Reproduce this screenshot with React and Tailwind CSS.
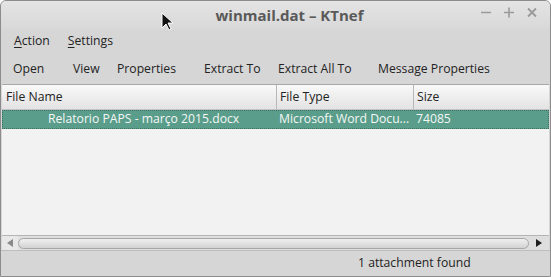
import React from 'react';

const Underlined = ({ first, rest }) => (
  <span>
    <span className="underline underline-offset-2">{first}</span>
    {rest}
  </span>
);

const App = () => {
  const toolbar = [
    ['Open', 'w-[60px]'],
    ['View', 'w-[44px]'],
    ['Properties', 'w-[87px]'],
    ['Extract To', 'w-[74px]'],
    ['Extract All To', 'w-[100px]'],
    ['Message Properties', ''],
  ];

  return (
    <div
      className="w-[551px] h-[277px] flex flex-col bg-[#d6d6d6] border border-[#8c8c8c] rounded-t-[6px] overflow-hidden relative text-[#232323]"
      style={{ fontFamily: '"Open Sans", "Noto Sans", sans-serif' }}
    >
      {/* title bar */}
      <div className="h-[29px] relative flex items-center justify-center bg-gradient-to-b from-[#e4e4e4] to-[#d8d8d8]">
        <span className="text-[15px] font-bold text-[#595959] pl-[28px]">winmail.dat – KTnef</span>
        <div className="absolute right-[12px] top-[5px] flex items-center gap-[11px] text-[#9a9a9a]">
          <svg width="12" height="12" viewBox="0 0 12 12">
            <path d="M1 6.5h10" stroke="currentColor" strokeWidth="1.6" />
          </svg>
          <svg width="12" height="12" viewBox="0 0 12 12">
            <path d="M1 6.5h10M6 1.5v10" stroke="currentColor" strokeWidth="1.6" />
          </svg>
          <svg width="12" height="12" viewBox="0 0 12 12">
            <path d="M2 2.5l8 8M10 2.5l-8 8" stroke="currentColor" strokeWidth="1.8" />
          </svg>
        </div>
      </div>

      {/* menu bar */}
      <div className="h-[22px] flex items-center px-[13px] gap-[18px] text-[12.2px]">
        <Underlined first="A" rest="ction" />
        <Underlined first="S" rest="ettings" />
      </div>

      {/* toolbar */}
      <div className="h-[32px] pt-[3px] flex items-center pl-[12px] text-[12.2px]">
        {toolbar.map(([label, w]) => (
          <span key={label} className={`${w} shrink-0`}>
            {label}
          </span>
        ))}
      </div>

      {/* table */}
      <div className="flex-1 mx-[1px] flex flex-col border-t border-[#a8a8a8] bg-[#f2f2f2]">
        <div className="h-[25px] flex text-[12.2px] bg-gradient-to-b from-[#f9f9f9] to-[#e3e3e3] border-b border-[#c4c4c4]">
          <div className="w-[275px] pl-[4px] flex items-center border-r border-[#b8b8b8]">File Name</div>
          <div className="w-[137px] pl-[3px] flex items-center border-r border-[#b8b8b8]">File Type</div>
          <div className="flex-1 pl-[3px] flex items-center">Size</div>
        </div>
        <div className="h-[19px] flex items-center text-[12.2px] text-[#f4f8f6] bg-[#5a9d8a] border border-dotted border-[#3f6f62]">
          <div className="w-[275px] pl-[45px] whitespace-nowrap overflow-hidden">Relatorio PAPS - março 2015.docx</div>
          <div className="w-[137px] pl-[1px] whitespace-nowrap">Microsoft Word Docu...</div>
          <div className="flex-1 pl-[1px]">74085</div>
        </div>
        <div className="flex-1" />
        {/* horizontal scrollbar */}
        <div className="h-[15px] flex items-center border-t border-[#b4b4b4] bg-[#dedede]">
          <div className="w-[16px] h-full flex items-center justify-center bg-[#e8e8e8]">
            <svg width="8" height="8" viewBox="0 0 8 8">
              <path d="M1 4l6-4v8z" fill="#8a8a8a" />
            </svg>
          </div>
          <div className="flex-1 h-[11px] rounded-full border border-[#a6a6a6] bg-gradient-to-b from-[#f0f0f0] to-[#d2d2d2]" />
          <div className="w-[20px] h-full flex items-center justify-center">
            <svg width="8" height="8" viewBox="0 0 8 8">
              <path d="M7 4l-6-4v8z" fill="#1e1e1e" />
            </svg>
          </div>
        </div>
      </div>

      {/* status bar */}
      <div className="h-[26px] flex items-center border-t border-[#bdbdbd] text-[12.2px]">
        <span className="pl-[357px]">1 attachment found</span>
      </div>

      {/* mouse cursor */}
      <svg className="absolute left-[160px] top-[11px]" width="14" height="20" viewBox="0 0 14 20">
        <path d="M1 1v15l4-4 3 6 2-1-3-6h5z" fill="#111" stroke="#fff" strokeWidth="1" />
      </svg>
    </div>
  );
};

export default App;
